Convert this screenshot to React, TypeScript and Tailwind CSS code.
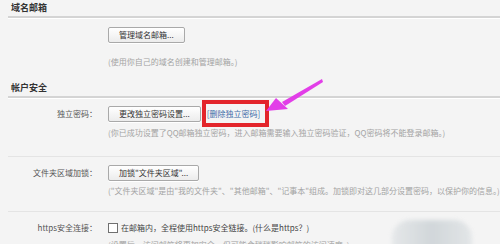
import React from "react";

const font = { fontFamily: '"Noto Sans CJK SC", "Noto Sans", sans-serif' };

const Btn = ({ children }: { children: React.ReactNode }) => (
  <button className="h-[16px] px-[10px] text-[8px] leading-none text-[#333] border border-[#a9a9a9] rounded-[2px] bg-gradient-to-b from-white to-[#ececec] shadow-[0_1px_0_#fff]">
    {children}
  </button>
);

const Heading = ({ title }: { title: string }) => (
  <div>
    <div className="pl-[11px] h-[16px] leading-[16px] text-[9px] font-bold text-[#333]">
      {title}
    </div>
    <div className="ml-[8px] border-t-2 border-[#d4d4d4] border-b border-b-white"></div>
  </div>
);

const Row = ({
  label,
  children,
}: {
  label: string;
  children: React.ReactNode;
}) => (
  <div className="flex items-center h-[16px]">
    <div className="w-[97px] text-right text-[8px] text-[#555]">{label}</div>
    <div className="ml-[11px] flex items-center">{children}</div>
  </div>
);

const Desc = ({ children }: { children: React.ReactNode }) => (
  <div className="pl-[108px] h-[12px] leading-[12px] text-[8px] text-[#a3a3a3] whitespace-nowrap">
    {children}
  </div>
);

const Separator = () => <div className="ml-[8px] border-t border-[#e4e4e4]"></div>;

export default function App() {
  return (
    <div
      className="relative w-[500px] h-[244px] overflow-hidden bg-[#f4f4f4]"
      style={font}
    >
      <Heading title="域名邮箱" />
      <div className="mt-[8px] pl-[108px] flex">
        <Btn>管理域名邮箱...</Btn>
      </div>
      <div className="mt-[13px]">
        <Desc>(使用你自己的域名创建和管理邮箱。)</Desc>
      </div>

      <div className="mt-[12px]">
        <Heading title="帐户安全" />
      </div>
      <div className="mt-[7px]">
        <Row label="独立密码：">
          <Btn>更改独立密码设置...</Btn>
          <span className="relative ml-[6px] text-[8px] text-[#3b6ba8]">
            [删除独立密码]
            <span className="absolute -left-[5px] -right-[9px] -top-[8px] -bottom-[7px] border-[4px] border-[#e3252b]"></span>
          </span>
        </Row>
      </div>
      <div className="mt-[5px]">
        <Desc>
          (你已成功设置了QQ邮箱独立密码，进入邮箱需要输入独立密码验证，QQ密码将不能登录邮箱。)
        </Desc>
      </div>

      <div className="mt-[17px]">
        <Separator />
      </div>
      <div className="mt-[8px]">
        <Row label="文件夹区域加锁：">
          <Btn>加锁"文件夹区域"...</Btn>
        </Row>
      </div>
      <div className="mt-[4px]">
        <Desc>
          ("文件夹区域"是由"我的文件夹"、"其他邮箱"、"记事本"组成。加锁即对这几部分设置密码，以保护你的信息。)
        </Desc>
      </div>

      <div className="mt-[14px]">
        <Separator />
      </div>
      <div className="mt-[8px]">
        <Row label="https安全连接：">
          <span className="w-[10px] h-[10px] border border-[#707070] bg-white mr-[3px]"></span>
          <span className="text-[8px] text-[#444] whitespace-nowrap">
            在邮箱内，全程使用https安全链接。(什么是https？)
          </span>
        </Row>
      </div>
      <div className="mt-[3px]">
        <Desc>(设置后，访问邮箱将更加安全，但可能会稍稍影响邮箱的访问速度。)</Desc>
      </div>

      {/* annotation arrow */}
      <svg
        className="absolute left-0 top-0 pointer-events-none"
        width="500"
        height="244"
      >
        <polygon points="322,79 323,82 285,106 282,102" fill="#e23ee8" />
        <polygon points="266,111 276,98 288,109" fill="#e23ee8" />
      </svg>

      {/* blurred watermark */}
      <div className="absolute left-[392px] top-[220px] w-[80px] h-[40px] rounded-t-[18px] bg-gradient-to-r from-[#e2e5e7] via-[#c9d0d4] to-[#dfe3e5] blur-[2px] opacity-80"></div>
    </div>
  );
}
